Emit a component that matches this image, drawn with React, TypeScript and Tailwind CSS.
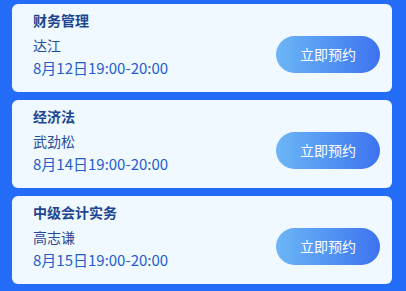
const LESSONS = [
  { title: '财务管理', teacher: '达江', time: '8月12日19:00-20:00' },
  { title: '经济法', teacher: '武劲松', time: '8月14日19:00-20:00' },
  { title: '中级会计实务', teacher: '高志谦', time: '8月15日19:00-20:00' },
];

export default function App() {
  return (
    <div className="w-[406px] h-[291px] bg-[#236cf8] pl-3 pr-[14px] pt-1 flex flex-col gap-2 font-['Noto_Sans_CJK_SC',sans-serif]">
      {LESSONS.map((item) => (
        <div
          key={item.title}
          className="h-[88px] shrink-0 rounded-md bg-[#f0f9ff] pl-[21px] pr-3 flex items-center justify-between"
        >
          <div className="flex flex-col self-start pt-[6px]">
            <h3 className="text-[14px] font-bold leading-[20px] text-[#1d4690]">{item.title}</h3>
            <p className="text-[14px] leading-[20px] mt-[5px] text-[#2a4b98]">{item.teacher}</p>
            <p className="text-[15px] leading-[20px] mt-[3px] text-[#2460cc]">{item.time}</p>
          </div>
          <button className="w-[104px] h-[37px] mt-[13px] rounded-full bg-gradient-to-r from-[#6db6f6] to-[#3e72ef] text-white text-[14px]">
            立即预约
          </button>
        </div>
      ))}
    </div>
  );
}
